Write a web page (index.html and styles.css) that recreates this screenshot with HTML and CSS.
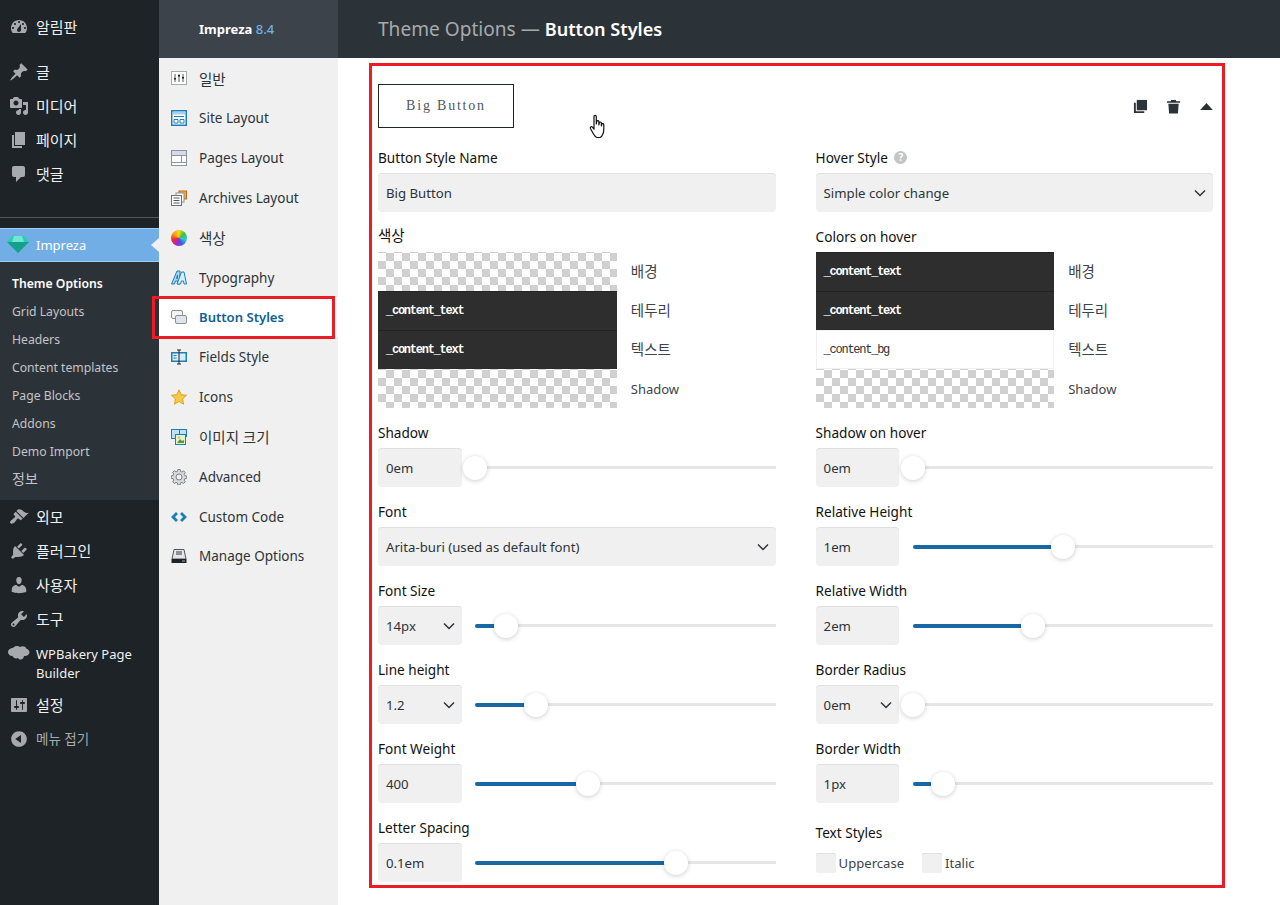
FILE: index.html
```html
<!DOCTYPE html>
<html lang="ko">
<head>
<meta charset="utf-8">
<title>Theme Options — Button Styles</title>
<link rel="stylesheet" href="styles.css">
</head>
<body>
<div class="page">
  <nav class="admin">
    <ul class="menu first">
      <li class="item"><svg class="dash" viewBox="0 0 20 20"><path fill-rule="evenodd" d="M3.76 16h12.48c1.1-1.37 1.76-3.11 1.76-5 0-4.42-3.58-8-8-8s-8 3.58-8 8c0 1.89.66 3.63 1.76 5zM10 4c.55 0 1 .45 1 1s-.45 1-1 1-1-.45-1-1 .45-1 1-1zM6 6c.55 0 1 .45 1 1s-.45 1-1 1-1-.45-1-1 .45-1 1-1zm8 0c.55 0 1 .45 1 1s-.45 1-1 1-1-.45-1-1 .45-1 1-1zm-5.37 5.55L12 7v6c0 1.1-.9 2-2 2s-2-.9-2-2c0-.57.24-1.08.63-1.45zM4 10c.55 0 1 .45 1 1s-.45 1-1 1-1-.45-1-1 .45-1 1-1zm12 0c.55 0 1 .45 1 1s-.45 1-1 1-1-.45-1-1 .45-1 1-1z"/></svg><span>알림판</span></li>
    </ul>
    <ul class="menu second">
      <li class="item"><svg class="dash" viewBox="0 0 20 20"><path d="M10.44 3.02l1.82-1.82 6.36 6.35-1.83 1.82c-1.05-.68-2.48-.57-3.41.36l-.75.75c-.92.93-1.04 2.35-.35 3.41l-1.83 1.82-2.41-2.41-2.8 2.79c-.42.42-3.38 2.71-3.8 2.29s1.86-3.39 2.28-3.81l2.79-2.79L4.1 9.36l1.83-1.82c1.05.69 2.48.57 3.4-.36l.75-.75c.93-.92 1.05-2.35.36-3.41z"/></svg><span>글</span></li>
      <li class="item"><svg class="dash" viewBox="0 0 20 20"><path fill-rule="evenodd" d="M13 11V4c0-.55-.45-1-1-1h-1.67L9 1H5L3.67 3H2c-.55 0-1 .45-1 1v7c0 .55.45 1 1 1h10c.55 0 1-.45 1-1zM7 4.5c1.38 0 2.5 1.12 2.5 2.5S8.38 9.5 7 9.5 4.5 8.38 4.5 7 5.62 4.5 7 4.5zM14 6h5v10.5c0 1.38-1.12 2.5-2.5 2.5S14 17.88 14 16.5s1.12-2.5 2.5-2.5c.17 0 .34.02.5.05V9h-3V6zm-4 8.05V13h2v3.5c0 1.38-1.12 2.5-2.5 2.5S7 17.88 7 16.5 8.12 14 9.5 14c.17 0 .34.02.5.05z"/></svg><span>미디어</span></li>
      <li class="item"><svg class="dash" viewBox="0 0 20 20"><path d="M6 15V2h10v13H6zm-1 1h8v2H3V5h2v11z"/></svg><span>페이지</span></li>
      <li class="item"><svg class="dash" viewBox="0 0 20 20"><path d="M5 2h9c1.1 0 2 .9 2 2v7c0 1.1-.9 2-2 2h-2l-5 5v-5H5c-1.1 0-2-.9-2-2V4c0-1.1.9-2 2-2z"/></svg><span>댓글</span></li>
    </ul>
    <div class="sep"></div>
    <div class="item current">
      <svg class="gem" viewBox="0 0 22 20"><path fill="#2bcfb0" d="M5 1h12l5 6-11 11L0 7z"/><path fill="#14a08c" d="M0 7h22L11 18z"/><path fill="#6fe8d2" d="M7 1h8l2 6H5z"/></svg>
      <span>Impreza</span>
    </div>
    <ul class="sub">
      <li class="strong">Theme Options</li>
      <li>Grid Layouts</li>
      <li>Headers</li>
      <li>Content templates</li>
      <li>Page Blocks</li>
      <li>Addons</li>
      <li>Demo Import</li>
      <li class="ko">정보</li>
    </ul>
    <ul class="menu">
      <li class="item"><svg class="dash" viewBox="0 0 20 20"><path d="M14.48 11.06L7.41 3.99l1.5-1.5c.5-.56 2.3-.47 3.51.32 1.21.8 1.43 1.28 2.91 2.1 1.18.64 2.45 1.26 4.45.85zm-.71.71L6.7 4.7 4.93 6.47c-.39.39-.39 1.02 0 1.41l1.06 1.06c.39.39.39 1.03 0 1.42-.6.6-1.43 1.11-2.21 1.69-.35.26-.7.53-1.01.84C1.43 13.23.4 15.17 1.5 16.28c1.1 1.1 3.05.07 4.39-1.27.31-.31.58-.66.84-1.01.58-.78 1.09-1.61 1.69-2.21.39-.39 1.03-.39 1.42 0l1.06 1.06c.39.39 1.02.39 1.41 0z"/></svg><span>외모</span></li>
      <li class="item"><svg class="dash" viewBox="0 0 20 20"><path d="M13.11 4.36L9.87 7.6 8 5.73l3.24-3.24c.35-.34 1.05-.2 1.56.32.52.51.66 1.21.31 1.55zm-8 1.77l.91-1.12 9.01 9.01-1.19.84c-.71.71-2.63 1.16-3.82 1.16H6.14L4.9 17.26c-.59.59-1.54.59-2.12 0-.59-.58-.59-1.53 0-2.12l1.24-1.24v-3.88c0-1.13.4-3.19 1.09-3.89zm7.26 3.97l3.24-3.24c.34-.35 1.04-.21 1.55.31.52.51.66 1.21.31 1.55l-3.24 3.25z"/></svg><span>플러그인</span></li>
      <li class="item"><svg class="dash" viewBox="0 0 20 20"><path d="M10 9.25c-2.27 0-2.73-3.44-2.73-3.44C7 4.02 7.82 2 9.97 2c2.16 0 2.98 2.02 2.71 3.81 0 0-.41 3.44-2.68 3.44zm0 2.57L12.72 10c2.39 0 4.52 2.33 4.52 4.53v2.49s-3.65 1.13-7.24 1.13c-3.65 0-7.24-1.13-7.24-1.13v-2.49c0-2.25 1.94-4.48 4.47-4.48z"/></svg><span>사용자</span></li>
      <li class="item"><svg class="dash" viewBox="0 0 20 20"><path fill-rule="evenodd" d="M16.68 9.77c-1.34 1.34-3.3 1.67-4.95.99l-5.41 6.52c-.99.99-2.59.99-3.58 0s-.99-2.59 0-3.57l6.52-5.42c-.68-1.65-.35-3.61.99-4.95 1.28-1.28 3.12-1.62 4.72-1.06l-2.89 2.89 2.82 2.82 2.86-2.87c.53 1.58.18 3.39-1.08 4.65zM3.81 16.21c.4.39 1.04.39 1.43 0 .4-.4.4-1.04 0-1.43-.39-.4-1.03-.4-1.43 0-.39.39-.39 1.03 0 1.43z"/></svg><span>도구</span></li>
      <li class="item tall"><svg class="cloud" viewBox="0 0 22 18"><path d="M5 3c2-2.5 5-2.5 7-1 2.500-1.500 5.500-.8 6.300 1.500C21 4.500 22.500 7 20.500 9.500 19.500 11 17.500 11 16 11c-.3 2-1.500 3.500-3.500 3.500-1.200 0-2-.7-2.500-1.500-2.500 1-4.500 0-5.500-2C1.500 11 0 9 0 7s2.500-4 5-4z"/></svg><span>WPBakery Page<br>Builder</span></li>
      <li class="item"><svg class="dash" viewBox="0 0 20 20"><path fill-rule="evenodd" d="M18 16V4c0-.55-.45-1-1-1H3c-.55 0-1 .45-1 1v12c0 .55.45 1 1 1h14c.55 0 1-.45 1-1zM8 11h1c.55 0 1 .45 1 1s-.45 1-1 1H8v1.500c0 .28-.22.5-.5.5s-.5-.22-.5-.5V13H6c-.55 0-1-.45-1-1s.45-1 1-1h1V5.500c0-.28.22-.5.5-.5s.5.22.5.5V11zm5-2h-1c-.55 0-1-.45-1-1s.45-1 1-1h1V5.500c0-.28.22-.5.5-.5s.5.22.5.5V7h1c.55 0 1 .45 1 1s-.45 1-1 1h-1v5.500c0 .28-.22.5-.5.5s-.5-.22-.5-.5V9z"/></svg><span>설정</span></li>
      <li class="item dim"><svg class="dash" viewBox="0 0 20 20"><path fill-rule="evenodd" d="M10 2.160c4.330 0 7.840 3.510 7.840 7.840s-3.510 7.840-7.840 7.840S2.160 14.330 2.160 10 5.710 2.160 10 2.160zm2 11.720V6.120L6.180 9.970z"/></svg><span>메뉴 접기</span></li>
    </ul>
  </nav>

  <aside class="tabs">
    <div class="brand">Impreza <b>8.4</b></div>
    <ul class="tablist">
      <li class="tab ko"><svg class="ti" viewBox="0 0 16 16"><rect x=".5" y="1.500" width="15" height="13" fill="#fff" stroke="#a7aaad"/><path stroke="#50575e" d="M4 4v8M8 4v8M12 4v8"/><path fill="#1d2327" d="M3 8h2v1.500H3zM7 5h2v1.500H7zM11 7h2v1.500h-2z"/></svg>일반</li>
      <li class="tab"><svg class="ti" viewBox="0 0 16 16"><rect x=".75" y=".75" width="14.500" height="14.500" fill="#fff" stroke="#1e7fb8" stroke-width="1.500"/><path fill="#a5d0ea" d="M2 2h12v2.500H2z"/><path fill="none" stroke="#1e7fb8" d="M3 6.500h10M3 9.500h4v3.500H3zM9 9.500h4v3.500H9z"/></svg>Site Layout</li>
      <li class="tab"><svg class="ti" viewBox="0 0 16 16"><rect x=".5" y=".5" width="15" height="15" fill="#fff" stroke="#8c94a3"/><path fill="#d5dae3" d="M1 1h14v4H1z"/><path fill="none" stroke="#8c94a3" d="M1 5.500h14M1 12.500h14M10.500 5.500v7"/></svg>Pages Layout</li>
      <li class="tab"><svg class="ti" viewBox="0 0 16 16"><rect x="8" y="1" width="7.500" height="8" fill="#f4a640" stroke="#c66a12"/><rect x="5" y="3" width="8" height="9" fill="#fff" stroke="#8c8f94"/><rect x=".5" y="5.500" width="10" height="10" fill="#fff" stroke="#6b7078"/><path stroke="#50575e" d="M2.500 8h6M2.500 10.500h6M2.500 13h6"/></svg>Archives Layout</li>
      <li class="tab ko"><span class="wheel"></span>색상</li>
      <li class="tab"><svg class="ti" viewBox="0 0 16 16"><path fill="#a8d4f0" stroke="#1e7fb8" d="M.5 14 6 1h3v13H6.500v-3H4.500L3.500 14zM5.500 8.500h1V5z"/><path fill="#d7edf9" stroke="#1e7fb8" d="M6 14 10.500 2h2.500l2.500 12h-2.500l-.5-3h-2l-1 3z"/></svg>Typography</li>
      <li class="tab active"><svg class="ti" viewBox="0 0 16 16"><rect x=".5" y="1.500" width="11" height="8" rx="1.500" fill="#f3f4f6" stroke="#8c8f94"/><rect x="4.500" y="6.500" width="11" height="8" rx="1.500" fill="#dfe4ec" stroke="#8c8f94"/></svg>Button Styles</li>
      <li class="tab"><svg class="ti" viewBox="0 0 16 16"><rect x=".75" y="3.750" width="14.500" height="8.500" fill="#d8ecf8" stroke="#1e7fb8" stroke-width="1.500"/><path fill="#1e7fb8" d="M2.500 6h3v1h-3zM2.500 8.500h3v1h-3z"/><path stroke="#1d2327" fill="none" d="M6 1h4M8 1v14M6 15h4"/></svg>Fields Style</li>
      <li class="tab"><svg class="ti" viewBox="0 0 16 16"><path fill="#f7c94a" stroke="#dca21f" d="M8 .8l2.200 4.900 5.300.6-4 3.600 1.100 5.300L8 12.500l-4.600 2.700 1.100-5.300-4-3.600 5.300-.6z"/></svg>Icons</li>
      <li class="tab ko"><svg class="ti" viewBox="0 0 16 16"><rect x=".5" y=".5" width="10" height="9" fill="#bfe0f3" stroke="#1e7fb8"/><rect x="8.500" y=".5" width="7" height="7" fill="#bfe0f3" stroke="#1e7fb8"/><rect x="4.500" y="5.500" width="10" height="10" fill="#e4f3cf" stroke="#1e7fb8"/><path fill="#4f9d34" d="M6 14l3-4 2 2 2-1v3z"/><path fill="#e8b93a" d="M7 7.500h2v2H7z"/></svg>이미지 크기</li>
      <li class="tab"><svg class="ti" viewBox="0 0 16 16"><path fill-rule="evenodd" fill="#d8d9db" stroke="#7c8087" d="M6.800.5h2.400l.4 2 1.300.5 1.700-1.100 1.700 1.700-1.100 1.700.5 1.300 2 .4v2.400l-2 .4-.5 1.300 1.100 1.700-1.700 1.700-1.700-1.100-1.300.5-.4 2H6.800l-.4-2-1.300-.5-1.700 1.100-1.700-1.700 1.100-1.700-.5-1.300-2-.4V6.800l2-.4.500-1.300L1.700 3.400l1.700-1.700 1.700 1.100 1.300-.5zM8 5a3 3 0 1 0 0 6 3 3 0 0 0 0-6z"/></svg>Advanced</li>
      <li class="tab"><svg class="ti" viewBox="0 0 16 16"><path fill="#1e7fb8" d="M5 3 7 5 4 8l3 3-2 2-5-5zM11 3 9 5l3 3-3 3 2 2 5-5z"/></svg>Custom Code</li>
      <li class="tab"><svg class="ti" viewBox="0 0 16 16"><path fill="#e4e6e9" stroke="#50575e" d="M3 1.500h10l2 9.500H1z"/><path fill="#8c8f94" d="M5 3h6v4H5z"/><path fill="#1d2327" d="M.5 11h15v4H.5z"/><path fill="#a7aaad" d="M11 12.500h3v1h-3z"/></svg>Manage Options</li>
    </ul>
  </aside>

  <main class="main">
    <header class="title"><span>Theme Options —</span> <strong>Button Styles</strong></header>
    <div class="content">
      <div class="preview-row">
        <div class="preview">Big Button</div>
        <div class="actions">
          <svg class="act" viewBox="0 0 16 16"><path d="M4 1h11v11H4z"/><path d="M1 4h2v9h9v2H1z"/></svg>
          <svg class="act" viewBox="0 0 16 16"><path d="M5.500 1h5l.5 1.500h4V4H1V2.500h4zM2.500 5h11l-.8 10.500H3.300z"/></svg>
          <svg class="act tri" viewBox="0 0 16 10"><path d="M8 1l7 8H1z"/></svg>
        </div>
      </div>
      <div class="cols">
        <div class="col">
          <div class="field"><label class="lab">Button Style Name</label><div class="ctl">Big Button</div></div>
          <div class="field"><label class="lab gap ko">색상</label>
            <div class="swatches">
              <div class="sw-row"><div class="sw check"></div><span class="sw-lab ko">배경</span></div>
              <div class="sw-row"><div class="sw dark">_content_text</div><span class="sw-lab ko">테두리</span></div>
              <div class="sw-row"><div class="sw dark">_content_text</div><span class="sw-lab ko">텍스트</span></div>
              <div class="sw-row"><div class="sw check"></div><span class="sw-lab">Shadow</span></div>
            </div>
          </div>
          <div class="field"><label class="lab">Shadow</label><div class="slide"><div class="ctl num">0em</div><div class="track"><div class="fill" style="width:0px"></div><div class="thumb"></div></div></div></div>
          <div class="field"><label class="lab">Font</label><div class="ctl sel">Arita-buri (used as default font)<svg class="chev" viewBox="0 0 12 8"><path d="M1 1.500l5 5 5-5"/></svg></div></div>
          <div class="field"><label class="lab">Font Size</label><div class="slide"><div class="ctl num sel">14px<svg class="chev" viewBox="0 0 12 8"><path d="M1 1.500l5 5 5-5"/></svg></div><div class="track"><div class="fill" style="width:31px"></div><div class="thumb"></div></div></div></div>
          <div class="field"><label class="lab">Line height</label><div class="slide"><div class="ctl num sel">1.2<svg class="chev" viewBox="0 0 12 8"><path d="M1 1.500l5 5 5-5"/></svg></div><div class="track"><div class="fill" style="width:61px"></div><div class="thumb"></div></div></div></div>
          <div class="field"><label class="lab">Font Weight</label><div class="slide"><div class="ctl num">400</div><div class="track"><div class="fill" style="width:113px"></div><div class="thumb"></div></div></div></div>
          <div class="field"><label class="lab">Letter Spacing</label><div class="slide"><div class="ctl num">0.1em</div><div class="track"><div class="fill" style="width:201px"></div><div class="thumb"></div></div></div></div>
        </div>
        <div class="col">
          <div class="field"><label class="lab">Hover Style <span class="help">?</span></label><div class="ctl sel">Simple color change<svg class="chev" viewBox="0 0 12 8"><path d="M1 1.500l5 5 5-5"/></svg></div></div>
          <div class="field"><label class="lab gap low">Colors on hover</label>
            <div class="swatches">
              <div class="sw-row"><div class="sw dark">_content_text</div><span class="sw-lab ko">배경</span></div>
              <div class="sw-row"><div class="sw dark">_content_text</div><span class="sw-lab ko">테두리</span></div>
              <div class="sw-row"><div class="sw light">_content_bg</div><span class="sw-lab ko">텍스트</span></div>
              <div class="sw-row"><div class="sw check"></div><span class="sw-lab">Shadow</span></div>
            </div>
          </div>
          <div class="field"><label class="lab">Shadow on hover</label><div class="slide"><div class="ctl num">0em</div><div class="track"><div class="fill" style="width:0px"></div><div class="thumb"></div></div></div></div>
          <div class="field"><label class="lab">Relative Height</label><div class="slide"><div class="ctl num">1em</div><div class="track"><div class="fill" style="width:150px"></div><div class="thumb"></div></div></div></div>
          <div class="field"><label class="lab">Relative Width</label><div class="slide"><div class="ctl num">2em</div><div class="track"><div class="fill" style="width:120px"></div><div class="thumb"></div></div></div></div>
          <div class="field"><label class="lab">Border Radius</label><div class="slide"><div class="ctl num sel">0em<svg class="chev" viewBox="0 0 12 8"><path d="M1 1.500l5 5 5-5"/></svg></div><div class="track"><div class="fill" style="width:0px"></div><div class="thumb"></div></div></div></div>
          <div class="field"><label class="lab">Border Width</label><div class="slide"><div class="ctl num">1px</div><div class="track"><div class="fill" style="width:30px"></div><div class="thumb"></div></div></div></div>
          <div class="field styles"><label class="lab">Text Styles</label>
            <div class="checks"><span class="chk"><i></i>Uppercase</span><span class="chk"><i></i>Italic</span></div>
          </div>
        </div>
      </div>
    </div>
  </main>
</div>
<div class="mark mark-tab"></div>
<div class="mark mark-form"></div>
<svg class="cursor" viewBox="0 0 18 26"><path fill="#fff" stroke="#111" stroke-width="1.200" stroke-linejoin="round" d="M5 2.500c0-1.500 2.300-1.500 2.300 0V10l.4-2.500c.3-1.300 2.200-1.100 2.200.3V11l.4-2.200c.3-1.200 2.100-1 2.100.3V12l.4-1.700c.4-1.100 2-.8 2 .4 0 3.500.2 6.500-.6 8.500-.7 2-2 3.800-3.300 4.300H8c-1.500-.5-2.500-1.700-3.500-3.500L1.400 14.500c-.6-1.300 1-2.400 2-1.300L5 15.200z"/></svg>
</body>
</html>
```
FILE: styles.css
```css
* { box-sizing: border-box; }
html, body { margin: 0; padding: 0; height: 905px; overflow: hidden; background: #fff; }
body { font-family: "Noto Sans", "Noto Sans CJK KR", sans-serif; font-size: 13.2px; color: #1d2327; }
ul { list-style: none; margin: 0; padding: 0; }

.page { display: flex; height: 905px; }

/* admin menu */
.admin { width: 159px; flex: none; background: #1d2327; color: #f0f0f1; font-size: 15px; }
.menu.first { padding-top: 10px; }
.menu.second { padding-top: 11px; }
.item { display: flex; align-items: center; height: 34px; padding-left: 9px; line-height: 19px; position: relative; }
.item > span { margin-left: 7px; }
.item.tall { height: 52px; align-items: flex-start; padding-top: 9px; font-size: 13px; }
.item.dim { color: #a7aaad; font-size: 13.5px; }
.dash { width: 20px; height: 20px; fill: #a7aaad; flex: none; }
.cloud { width: 22px; height: 18px; fill: #a7aaad; flex: none; margin-left: -1px; margin-right: -1px; }
.sep { margin-top: 26px; height: 1px; background: #50575e; }
.current { margin-top: 10px; background: #72aee6; color: #fff; box-shadow: inset 0 1px 0 #9fcdf5, inset 0 -1px 0 #9fcdf5; font-size: 13px; padding-left: 7px; }
.current > span { margin-left: 7px; }
.current::after { content: ""; position: absolute; right: 0; top: 10px; border: 7px solid transparent; border-right-color: #f0f0f0; border-left-width: 0; border-right-width: 8px; }
.gem { width: 22px; height: 20px; flex: none; }
.sub { background: #2c3338; padding: 8px 0 6px; height: 238px; font-size: 12.2px; color: #c3c4c7; }
.sub li { height: 28px; line-height: 28px; padding-left: 12px; }
.sub .strong { color: #fff; font-weight: 600; }
.sub .ko { font-size: 14px; line-height: 25px; }

/* options tabs */
.tabs { width: 179px; flex: none; background: #f0f0f0; }
.brand { height: 58px; background: #3c434a; color: #fff; font-size: 13px; font-weight: 700; line-height: 58px; padding-left: 40px; }
.brand b { color: #72aee6; font-weight: 500; }
.tablist { padding-top: .5px; }
.tab { display: flex; align-items: center; height: 39.83px; padding-left: 12px; font-size: 13.5px; color: #2c3338; }
.tab.ko { font-size: 14.5px; }
.ti, .wheel { width: 16px; height: 16px; margin-right: 12px; flex: none; }
.wheel { display: block; border-radius: 50%; background: conic-gradient(#f5d90a, #36c24a, #2fc7d6, #3b5fe0, #b020c8, #e8302f, #f5a21a, #f5d90a); }
.tab.active { background: #fff; color: #135e96; font-weight: 600; font-size: 13.1px; }

/* main */
.main { flex: 1; min-width: 0; background: #fff; }
.title { height: 58px; background: #2c3338; padding-left: 40px; line-height: 58px; font-size: 19.1px; color: #a7aaad; }
.title strong { color: #fff; font-weight: 600; font-size: 18.1px; }
.content { width: 836px; margin-left: 40px; }
.preview-row { display: flex; justify-content: space-between; align-items: flex-start; padding-top: 26px; height: 90px; }
.preview { width: 136px; height: 44px; border: 1px solid #1d2327; display: flex; align-items: center; justify-content: center; font-family: "Liberation Serif", serif; font-size: 14px; letter-spacing: 1.8px; color: #50575e; }
.actions { display: flex; align-items: center; gap: 18px; height: 44px; }
.act { width: 15px; height: 15px; fill: #2c3338; }
.act.tri { height: 9px; }

.cols { display: grid; grid-template-columns: 398px 397.6px; column-gap: 39.6px; }
.field { margin-bottom: 15px; }
.lab { display: block; height: 20px; line-height: 20px; margin-bottom: 5px; font-size: 13.6px; font-weight: 400; color: #111; }
.lab.gap { margin-top: -2px; margin-bottom: 7px; }
.lab.ko { font-size: 14.5px; }
.lab.low { margin-top: 0; margin-bottom: 5px; }
.ctl { height: 39px; background: #f0f0f0; border-radius: 4px; box-shadow: inset 0 1px 0 #e0e0e0; padding: 0 8px; font-size: 13.2px; color: #2c3338; display: flex; align-items: center; justify-content: space-between; }
.chev { width: 12px; height: 8px; fill: none; stroke: #2c3338; stroke-width: 1.5px; margin-right: -1px; }
.help { display: inline-block; width: 13px; height: 13px; line-height: 13px; border-radius: 50%; background: #c3c4c7; color: #fff; text-align: center; font-size: 10px; font-weight: 700; vertical-align: 2px; margin-left: 3px; }

.swatches { display: flex; flex-direction: column; }
.sw-row { display: flex; align-items: center; height: 39px; }
.sw { width: 60%; height: 39px; margin-right: 14px; padding-left: 8px; line-height: 40px; font-family: "Liberation Mono", monospace; font-size: 12px; letter-spacing: -1.25px; font-weight: 700; flex: none; }
.sw.check { background-color: #fff; background-image: linear-gradient(45deg, #d0d0d0 25%, transparent 25%, transparent 75%, #d0d0d0 75%), linear-gradient(45deg, #d0d0d0 25%, transparent 25%, transparent 75%, #d0d0d0 75%); background-size: 16px 16px; background-position: 0 1px, 8px 9px; }
.sw.dark { background: #2e2e2e; color: #fff; box-shadow: inset 0 1px 0 #232323; }
.sw.light { background: #fff; color: #2c3338; font-weight: 400; box-shadow: inset 0 0 0 1px #f0f0f0; }
.sw-lab { font-size: 13px; color: #3c434a; }
.sw-lab.ko { font-size: 14.5px; padding-bottom: 2px; }

.slide { display: flex; align-items: center; }
.num { width: 21%; flex: none; margin-right: 13.5px; }
.track { flex: 1; height: 3px; display: flex; align-items: center; background: #e6e6e6; min-width: 0; }
.fill { height: 4px; background: #1868a6; border-radius: 2px; flex: none; }
.thumb { width: 24px; height: 24px; border-radius: 50%; background: #fff; box-shadow: 0 1px 5px rgba(0,0,0,.2); margin-left: -12px; flex: none; }

.styles { padding-top: 5px; }
.checks { display: flex; gap: 18px; margin-top: 10px; }
.chk { display: flex; align-items: center; gap: 3px; height: 20px; font-size: 13.1px; color: #3c434a; }
.chk i { display: block; width: 20px; height: 20px; background: #f0f0f0; border-radius: 2px; box-shadow: inset 0 1px 0 #e0e0e0; }

/* annotation overlays */
.mark { position: absolute; border: 3px solid #ed1c24; pointer-events: none; }
.mark-tab { left: 152px; top: 296px; width: 183px; height: 43px; }
.mark-form { left: 369px; top: 63px; width: 856px; height: 825px; }
.cursor { position: absolute; left: 589px; top: 114px; width: 18px; height: 26px; }
```
